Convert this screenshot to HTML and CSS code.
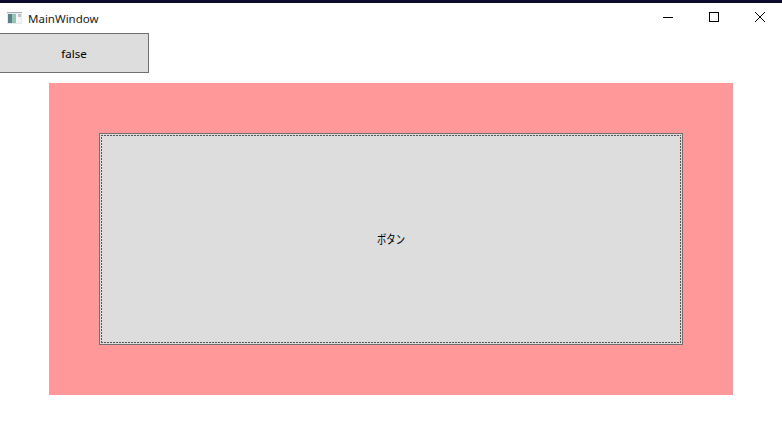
FILE: index.html
```html
<!DOCTYPE html>
<html lang="ja">
<head>
<meta charset="utf-8">
<title>MainWindow</title>
<link rel="stylesheet" href="styles.css">
</head>
<body>
<div class="window">
  <header class="titlebar">
    <svg class="app-icon" width="15" height="12" viewBox="0 0 15 12">
      <rect x="0" y="0" width="15" height="12" fill="#e6eaec"/>
      <rect x="0" y="0" width="15" height="1" fill="#a9b2b8"/>
      <rect x="1" y="2" width="4" height="9" fill="#5d7f8a"/>
      <rect x="5" y="2" width="4" height="9" fill="#94c4b6"/>
      <rect x="9" y="2" width="2" height="9" fill="#f4f6f6"/>
      <rect x="11" y="2" width="3" height="3" fill="#bcc6cc"/>
      <rect x="11" y="5" width="3" height="6" fill="#f4f6f6"/>
    </svg>
    <span class="title">MainWindow</span>
    <div class="controls">
      <span class="control"><svg width="10" height="10" viewBox="0 0 10 10"><path d="M0 5.5H10" stroke="#000" fill="none"/></svg></span>
      <span class="control"><svg width="10" height="10" viewBox="0 0 10 10"><rect x="0.5" y="0.5" width="9" height="9" stroke="#000" fill="none"/></svg></span>
      <span class="control"><svg width="10" height="10" viewBox="0 0 10 10"><path d="M0 0L10 10M10 0L0 10" stroke="#000" fill="none"/></svg></span>
    </div>
  </header>
  <button class="btn toggle">false</button>
  <section class="panel">
    <button class="btn main"><span class="focus"><span class="label">ボタン</span></span></button>
  </section>
</div>
</body>
</html>
```
FILE: styles.css
```css
* { box-sizing: border-box; }
html, body { margin: 0; padding: 0; background: #fff; }
body { width: 782px; height: 445px; overflow: hidden; font-family: "Noto Sans", "Open Sans", "Noto Sans CJK JP", sans-serif; }
.window { display: flex; flex-direction: column; align-items: flex-start; width: 782px; height: 445px; border-top: 3px solid #0a0a2a; }
.titlebar { display: flex; align-items: center; width: 100%; height: 30px; padding-left: 7px; }
.app-icon { flex: none; margin-right: 6px; }
.title { font-size: 11.5px; color: #1a1a1a; }
.controls { display: flex; margin: 0 -1px 2px auto; }
.control { display: flex; align-items: center; justify-content: center; width: 46px; height: 28px; }
.btn { display: flex; align-items: center; justify-content: center; padding: 0; background: #dddddd; border: 1px solid #707070; color: #000; font-family: "Noto Sans", "Noto Sans CJK JP", sans-serif; font-size: 11.5px; }
.toggle { width: 150px; height: 40px; margin-left: -1px; }
.panel { display: flex; width: 684px; height: 312px; margin: 10px 0 0 49px; padding: 50px; background: #ff9999; }
.main { width: 100%; height: 100%; padding: 1px; }
.focus {
  display: flex; align-items: center; justify-content: center; width: 100%; height: 100%;
  background:
    repeating-linear-gradient(90deg, #555 0 2px, transparent 2px 3px) left top / 100% 1px no-repeat,
    repeating-linear-gradient(90deg, #555 0 2px, transparent 2px 3px) left bottom / 100% 1px no-repeat,
    repeating-linear-gradient(0deg, #555 0 2px, transparent 2px 3px) left top / 1px 100% no-repeat,
    repeating-linear-gradient(0deg, #555 0 2px, transparent 2px 3px) right top / 1px 100% no-repeat;
}
.label { display: inline-block; font-size: 12px; transform: scaleX(0.78); }
```
